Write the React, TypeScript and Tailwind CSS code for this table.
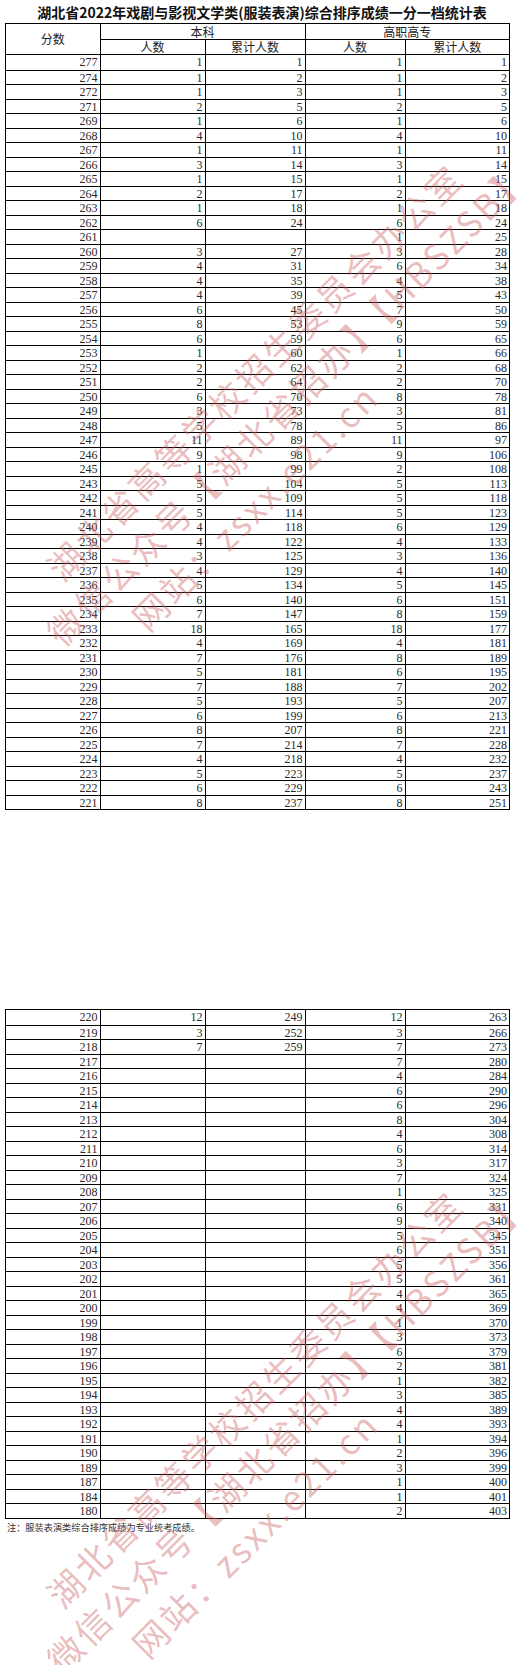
import React from 'react'

type Row = [string, string, string, string, string]

const page1: Row[] = [
  ['277', '1', '1', '1', '1'],
  ['274', '1', '2', '1', '2'],
  ['272', '1', '3', '1', '3'],
  ['271', '2', '5', '2', '5'],
  ['269', '1', '6', '1', '6'],
  ['268', '4', '10', '4', '10'],
  ['267', '1', '11', '1', '11'],
  ['266', '3', '14', '3', '14'],
  ['265', '1', '15', '1', '15'],
  ['264', '2', '17', '2', '17'],
  ['263', '1', '18', '1', '18'],
  ['262', '6', '24', '6', '24'],
  ['261', '', '', '1', '25'],
  ['260', '3', '27', '3', '28'],
  ['259', '4', '31', '6', '34'],
  ['258', '4', '35', '4', '38'],
  ['257', '4', '39', '5', '43'],
  ['256', '6', '45', '7', '50'],
  ['255', '8', '53', '9', '59'],
  ['254', '6', '59', '6', '65'],
  ['253', '1', '60', '1', '66'],
  ['252', '2', '62', '2', '68'],
  ['251', '2', '64', '2', '70'],
  ['250', '6', '70', '8', '78'],
  ['249', '3', '73', '3', '81'],
  ['248', '5', '78', '5', '86'],
  ['247', '11', '89', '11', '97'],
  ['246', '9', '98', '9', '106'],
  ['245', '1', '99', '2', '108'],
  ['243', '5', '104', '5', '113'],
  ['242', '5', '109', '5', '118'],
  ['241', '5', '114', '5', '123'],
  ['240', '4', '118', '6', '129'],
  ['239', '4', '122', '4', '133'],
  ['238', '3', '125', '3', '136'],
  ['237', '4', '129', '4', '140'],
  ['236', '5', '134', '5', '145'],
  ['235', '6', '140', '6', '151'],
  ['234', '7', '147', '8', '159'],
  ['233', '18', '165', '18', '177'],
  ['232', '4', '169', '4', '181'],
  ['231', '7', '176', '8', '189'],
  ['230', '5', '181', '6', '195'],
  ['229', '7', '188', '7', '202'],
  ['228', '5', '193', '5', '207'],
  ['227', '6', '199', '6', '213'],
  ['226', '8', '207', '8', '221'],
  ['225', '7', '214', '7', '228'],
  ['224', '4', '218', '4', '232'],
  ['223', '5', '223', '5', '237'],
  ['222', '6', '229', '6', '243'],
  ['221', '8', '237', '8', '251'],
]

const page2: Row[] = [
  ['220', '12', '249', '12', '263'],
  ['219', '3', '252', '3', '266'],
  ['218', '7', '259', '7', '273'],
  ['217', '', '', '7', '280'],
  ['216', '', '', '4', '284'],
  ['215', '', '', '6', '290'],
  ['214', '', '', '6', '296'],
  ['213', '', '', '8', '304'],
  ['212', '', '', '4', '308'],
  ['211', '', '', '6', '314'],
  ['210', '', '', '3', '317'],
  ['209', '', '', '7', '324'],
  ['208', '', '', '1', '325'],
  ['207', '', '', '6', '331'],
  ['206', '', '', '9', '340'],
  ['205', '', '', '5', '345'],
  ['204', '', '', '6', '351'],
  ['203', '', '', '5', '356'],
  ['202', '', '', '5', '361'],
  ['201', '', '', '4', '365'],
  ['200', '', '', '4', '369'],
  ['199', '', '', '1', '370'],
  ['198', '', '', '3', '373'],
  ['197', '', '', '6', '379'],
  ['196', '', '', '2', '381'],
  ['195', '', '', '1', '382'],
  ['194', '', '', '3', '385'],
  ['193', '', '', '4', '389'],
  ['192', '', '', '4', '393'],
  ['191', '', '', '1', '394'],
  ['190', '', '', '2', '396'],
  ['189', '', '', '3', '399'],
  ['187', '', '', '1', '400'],
  ['184', '', '', '1', '401'],
  ['180', '', '', '2', '403'],
]

function DataRows({ rows }: { rows: Row[] }) {
  return (
    <>
      {rows.map((row, i) => (
        <div
          key={row[0]}
          className={`grid grid-cols-[93.5px_105px_100px_100px_1fr] h-[14.5px] ${i > 0 ? 'border-t border-black' : ''}`}
        >
          {row.map((cell, j) => (
            <div
              key={j}
              className={`text-right pr-[2px] text-[12px] leading-[14px] text-[#2a2a2a] ${j > 0 ? 'border-l border-black' : ''}`}
            >
              {cell}
            </div>
          ))}
        </div>
      ))}
    </>
  )
}

function Header() {
  const cell = "flex items-center justify-center border-black font-['Noto_Sans_CJK_SC',sans-serif] text-[12px] leading-none text-[#222]"
  return (
    <div className="grid grid-cols-[93.5px_105px_100px_100px_1fr] grid-rows-[15px_15px] border-b border-black">
      <div className={`${cell} row-span-2`}>分数</div>
      <div className={`${cell} col-span-2 border-l`}>本科</div>
      <div className={`${cell} col-span-2 border-l`}>高职高专</div>
      <div className={`${cell} border-l border-t`}>人数</div>
      <div className={`${cell} border-l border-t`}>累计人数</div>
      <div className={`${cell} border-l border-t`}>人数</div>
      <div className={`${cell} border-l border-t`}>累计人数</div>
    </div>
  )
}

function Watermark({ top }: { top: number }) {
  const line =
    "absolute whitespace-nowrap origin-[0_50%] -rotate-45 font-['Noto_Sans_CJK_SC',sans-serif] text-[35px] leading-[35px] tracking-[3px] text-[rgba(205,95,95,0.42)] pointer-events-none select-none"
  return (
    <>
      <div className={line} style={{ left: 52, top: top + 555 }}>
        湖北省高等学校招生委员会办公室
      </div>
      <div className={line} style={{ left: 52, top: top + 620 }}>
        微信公众号【湖北省招办】【HBSZSB】
      </div>
      <div className={line} style={{ left: 137, top: top + 605 }}>
        网站：zsxx.e21.cn
      </div>
    </>
  )
}

export default function App() {
  return (
    <div className="relative w-[524px] h-[1665px] overflow-hidden bg-white font-['Liberation_Serif',serif]">
      <div className="h-[23px] flex items-center justify-center font-['Noto_Sans_CJK_SC',sans-serif] font-bold text-[14px] leading-none text-[#111]">
        湖北省2022年戏剧与影视文学类(服装表演)综合排序成绩一分一档统计表
      </div>

      <div className="ml-[5px] w-[505px] border-[1.5px] border-black">
        <Header />
        <DataRows rows={page1} />
      </div>

      <div className="ml-[5px] mt-[199px] w-[505px] border-[1.5px] border-black">
        <DataRows rows={page2} />
      </div>

      <div className="ml-[7px] mt-[2px] font-['Noto_Sans_CJK_SC',sans-serif] text-[9.2px] leading-[12px] text-[#333]">
        注：服装表演类综合排序成绩为专业统考成绩。
      </div>

      <Watermark top={0} />
      <Watermark top={1027} />
    </div>
  )
}
